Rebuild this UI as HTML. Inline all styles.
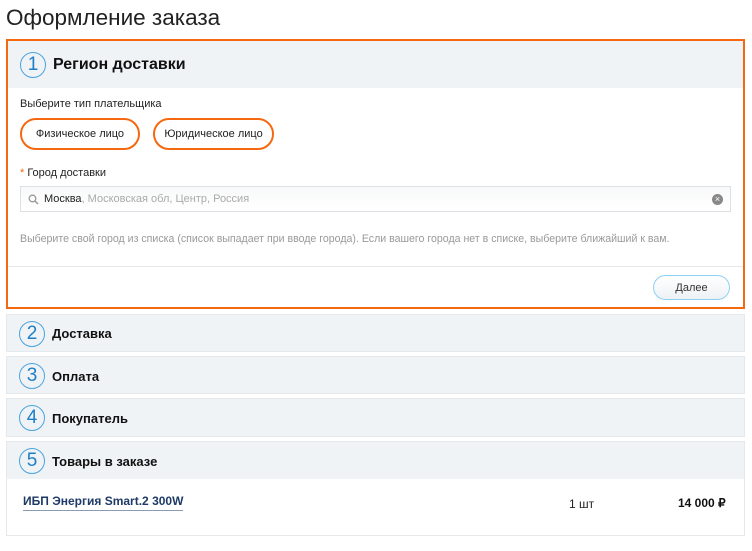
<!DOCTYPE html>
<html><head><meta charset="utf-8"><style>
*{box-sizing:border-box;margin:0;padding:0}
body{width:752px;height:551px;background:#fff;font-family:"Liberation Sans",Arial,sans-serif;color:#111;position:relative;overflow:hidden}
.abs{position:absolute}
h1{position:absolute;left:6px;top:5px;font-size:22.5px;font-weight:normal;color:#222}
.main{left:6px;top:39px;width:739px;height:270px;border:2.5px solid #f5680f;background:#fff}
.mh{position:absolute;left:0;top:0;right:0;height:47px;background:#f0f3f6}
.num{position:absolute;width:26px;height:26px;border:1.5px solid #4aa3df;border-radius:50%;color:#1c7fc7;font-size:19px;text-align:center;line-height:23px}
.sec{position:absolute;left:6px;width:739px;background:#f0f3f6;border:1px solid #e6e9ec}
.sec .t{position:absolute;left:45px;font-size:13px;font-weight:bold;color:#111}
.pill{position:absolute;height:32px;border:2.5px solid #f5680f;border-radius:16px;font-size:11px;text-align:center;line-height:28px;color:#222}
</style></head><body>
<h1>Оформление заказа</h1>
<div class="abs main">
 <div class="mh">
  <div class="num" style="left:12px;top:11px">1</div>
  <div class="abs" style="left:45px;top:15px;font-size:16px;font-weight:bold">Регион доставки</div>
 </div>
 <div class="abs" style="left:12px;top:57px;font-size:11px;color:#222">Выберите тип плательщика</div>
 <div class="pill" style="left:12px;top:77px;width:120px">Физическое лицо</div>
 <div class="pill" style="left:145px;top:77px;width:121px">Юридическое лицо</div>
 <div class="abs" style="left:12px;top:126px;font-size:11px;color:#222"><span style="color:#f5680f">*</span> Город доставки</div>
 <div class="abs" style="left:12px;top:145px;width:711px;height:26px;border:1px solid #dde1e5;background:linear-gradient(#f8f9fa,#fff)">
  <svg class="abs" style="left:7px;top:7px" width="11" height="11" viewBox="0 0 11 11"><circle cx="4.5" cy="4.5" r="3.3" fill="none" stroke="#999" stroke-width="1.3"/><path d="M7 7l3 3" stroke="#999" stroke-width="1.5"/></svg>
  <div class="abs" style="left:23px;top:6px;font-size:11px;color:#222">Москва<span style="color:#aaa">, Московская обл, Центр, Россия</span></div>
  <div class="abs" style="right:7px;top:7px;width:11px;height:11px;border-radius:50%;background:#888;color:#fff;font-size:9px;line-height:11px;text-align:center">×</div>
 </div>
 <div class="abs" style="left:12px;top:192px;font-size:10.6px;color:#999;white-space:nowrap">Выберите свой город из списка (список выпадает при вводе города). Если вашего города нет в списке, выберите ближайший к вам.</div>
 <div class="abs" style="left:0;right:0;top:225px;border-top:1px solid #e6e9ec"></div>
 <div class="abs" style="left:645px;top:234px;width:77px;height:25px;border:1px solid #8fd0f2;border-radius:13px;background:linear-gradient(#fff,#eef2f5);font-size:11px;text-align:center;line-height:24px;color:#333">Далее</div>
</div>
<div class="sec" style="top:314px;height:38px"><div class="num" style="left:12px;top:6px">2</div><div class="t" style="top:11px">Доставка</div></div>
<div class="sec" style="top:356px;height:38px"><div class="num" style="left:12px;top:6px">3</div><div class="t" style="top:12px">Оплата</div></div>
<div class="sec" style="top:398px;height:39px"><div class="num" style="left:12px;top:6px">4</div><div class="t" style="top:12px">Покупатель</div></div>
<div class="sec" style="top:441px;height:95px;background:#fff">
 <div class="abs" style="left:0;right:0;top:0;height:37px;background:#f0f3f6"></div>
 <div class="num" style="left:12px;top:6px">5</div><div class="t" style="top:12px">Товары в заказе</div>
 <div class="abs" style="left:16px;top:52px;font-size:12px;font-weight:bold;color:#1d3a66;border-bottom:1px solid #8a9bb5;padding-bottom:2px">ИБП Энергия Smart.2 300W</div>
 <div class="abs" style="left:562px;top:55px;font-size:12px;color:#222">1 шт</div>
 <div class="abs" style="left:671px;top:54px;font-size:12px;font-weight:bold;color:#111">14 000 ₽</div>
</div>
</body></html>
